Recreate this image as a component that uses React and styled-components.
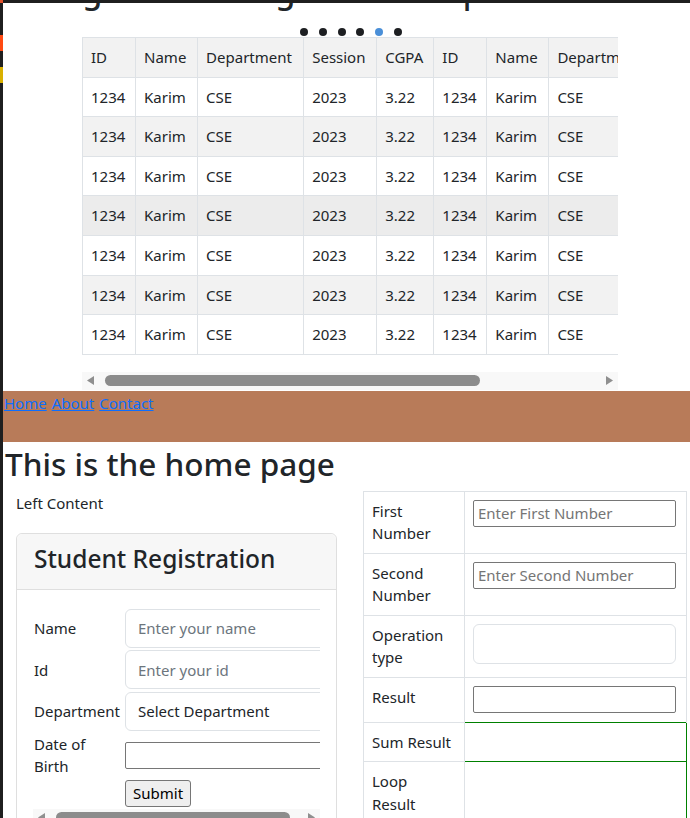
import React from "react";
import styled, { createGlobalStyle } from "styled-components";

const FONT = `"Noto Sans", "Open Sans", "Liberation Sans", sans-serif`;

const GlobalStyle = createGlobalStyle`
  html, body { margin: 0; padding: 0; background: #fff; overflow: hidden; }
  body { font-family: ${FONT}; font-size: 15px; color: #212529; }
  * { box-sizing: border-box; }
`;

const Frame = styled.div`
  display: flex;
  flex-direction: column;
  width: 690px;
  height: 818px;
  overflow: hidden;
`;

const TopBar = styled.div`
  display: flex;
  height: 3px;
  flex-shrink: 0;
  background: #1f1f1f;
`;

const Corner = styled.span`
  width: 3px;
  background: #e2502a;
`;

const Shell = styled.div`
  display: flex;
  flex: 1;
  min-height: 0;
`;

const Strip = styled.div`
  width: 3px;
  flex-shrink: 0;
  display: flex;
  flex-direction: column;
  background: #1f1f1f;
`;

const StripMark = styled.span`
  height: 16px;
  margin-top: ${(p) => p.$offset}px;
  background: ${(p) => p.$color};
`;

const Main = styled.main`
  flex: 1;
  min-width: 0;
  overflow: hidden;
`;

const HeadingClip = styled.div`
  height: 8px;
  overflow: hidden;
`;

const SlideTitle = styled.h2`
  margin: -32px 0 0 41px;
  font-size: 32px;
  line-height: 40px;
  font-weight: 500;
  white-space: nowrap;
`;

const Dots = styled.div`
  display: flex;
  gap: 10.8px;
  padding: 17px 0 0 297px;
  margin-bottom: 1px;
`;

const Dot = styled.span`
  width: 8px;
  height: 8px;
  border-radius: 50%;
  background: ${(p) => (p.$active ? "#4a8fd8" : "#1d1f22")};
`;

const TableViewport = styled.div`
  margin-left: 79px;
  width: 536px;
  overflow: hidden;
`;

const DataTable = styled.table`
  border-collapse: collapse;
  table-layout: fixed;
  width: 1055px;
  line-height: 22.6px;
`;

const HeadCell = styled.th`
  border: 1px solid #dee2e6;
  padding: 8px;
  text-align: left;
  font-weight: 400;
  white-space: nowrap;
  overflow: hidden;
  background: #f2f2f2;
`;

const Row = styled.tr`
  background: ${(p) => p.$bg};
`;

const Cell = styled.td`
  border: 1px solid #dee2e6;
  padding: 8px;
  white-space: nowrap;
  overflow: hidden;
`;

const Track = styled.div`
  display: flex;
  align-items: center;
  width: ${(p) => p.$width}px;
  height: 18px;
  margin: ${(p) => p.$margin};
  background: #f8f8f8;
  flex-shrink: 0;
`;

const ArrowBtn = styled.span`
  width: 17px;
  height: 17px;
  display: flex;
  align-items: center;
  justify-content: center;
  flex-shrink: 0;
`;

const Thumb = styled.span`
  height: 11px;
  border-radius: 6px;
  background: #8c8c8c;
  margin-left: ${(p) => p.$left - 17}px;
  width: ${(p) => p.$width}px;
  flex-shrink: 0;
`;

const Spacer = styled.span`
  flex: 1;
`;

const Nav = styled.nav`
  display: flex;
  gap: 5px;
  height: 51px;
  padding-left: 1px;
  background: #b87b59;
  line-height: 24px;
`;

const NavLink = styled.a`
  color: #0d6efd;
  text-decoration: underline;
  height: 24px;
`;

const PageTitle = styled.h1`
  margin: 3px 0 8px 2px;
  font-size: 31.5px;
  line-height: 38px;
  font-weight: 500;
`;

const Columns = styled.div`
  display: flex;
  align-items: flex-start;
`;

const LeftCol = styled.div`
  width: 343px;
  flex-shrink: 0;
  padding-left: 13px;
`;

const RightCol = styled.div`
  flex: 1;
  padding-left: 17px;
`;

const Muted = styled.div`
  line-height: 24px;
`;

const Card = styled.section`
  margin-top: 18px;
  width: 321px;
  border: 1px solid #dfdfdf;
  border-radius: 6px;
`;

const CardHeader = styled.header`
  background: #f7f7f7;
  border-bottom: 1px solid #dfdfdf;
  border-radius: 6px 6px 0 0;
  padding: 10px 17px 15px;
`;

const CardTitle = styled.h3`
  margin: 0;
  font-size: 24.5px;
  line-height: 30px;
  font-weight: 500;
`;

const CardBody = styled.div`
  padding: 16px;
`;

const FormViewport = styled.div`
  width: 287px;
  overflow: hidden;
`;

const FormGrid = styled.form`
  display: grid;
  grid-template-columns: 91px 218px;
  row-gap: 2.5px;
  align-items: center;
  padding: 3px 0 0 1px;
  width: 310px;
`;

const Label = styled.label`
  line-height: 22px;
`;

const Control = styled.input`
  height: 39px;
  width: 100%;
  padding: 6px 12px;
  border: 1px solid #dee2e6;
  border-radius: 6px;
  font: 15px ${FONT};
  color: #212529;
  background: #fff;
  &::placeholder { color: #6c757d; }
`;

const SelectControl = styled.select`
  height: 39px;
  width: 100%;
  padding: 6px 12px;
  border: 1px solid #dee2e6;
  border-radius: 6px;
  font: 15px ${FONT};
  color: #212529;
  background: #fff;
  appearance: none;
`;

const PlainInput = styled.input`
  display: block;
  height: 27px;
  width: ${(p) => p.$width || "100%"};
  margin-bottom: ${(p) => (p.$inCell ? "1px" : "0")};
  padding: 1px 4px;
  border: 1px solid #767676;
  border-radius: 2px;
  font: 15px ${FONT};
  color: #212529;
  background: #fff;
  &::placeholder { color: #757575; }
`;

const SubmitButton = styled.button`
  grid-column: 2;
  justify-self: start;
  height: 27px;
  padding: 1px 7px;
  border: 1px solid #767676;
  border-radius: 3px;
  background: #efefef;
  color: #000;
  font: 15px ${FONT};
`;

const CalcTable = styled.table`
  border-collapse: collapse;
  table-layout: fixed;
  width: 323px;
  line-height: 22.5px;
`;

const CalcRow = styled.tr`
  border-top: 1px solid #dee2e6;
  border-bottom: 1px solid #dee2e6;
`;

const CalcCell = styled.td`
  border-left: 1px solid #dee2e6;
  border-right: 1px solid #dee2e6;
  padding: 8px;
  vertical-align: top;
  ${(p) => (p.$green ? "border: 1px solid #008000;" : "")}
`;

const BoxSelect = styled.select`
  display: block;
  width: 203px;
  height: 40px;
  border: 1px solid #dee2e6;
  border-radius: 6px;
  background: #fff;
  appearance: none;
`;

function Arrow({ dir }) {
  return (
    <svg width="7" height="9" viewBox="0 0 7 9">
      <polygon points={dir === "left" ? "7,0 7,9 0,4.5" : "0,0 0,9 7,4.5"} fill="#8f8f8f" />
    </svg>
  );
}

function ScrollBar({ width, thumbLeft, thumbWidth, margin }) {
  return (
    <Track $width={width} $margin={margin}>
      <ArrowBtn><Arrow dir="left" /></ArrowBtn>
      <Thumb $left={thumbLeft} $width={thumbWidth} />
      <Spacer />
      <ArrowBtn><Arrow dir="right" /></ArrowBtn>
    </Track>
  );
}

const headers = ["ID", "Name", "Department", "Session", "CGPA"];
const widths = [53, 62, 106, 73, 57];
const rowValues = ["1234", "Karim", "CSE", "2023", "3.22"];
const rowBgs = ["#fff", "#f2f2f2", "#fff", "#ececec", "#fff", "#f2f2f2", "#fff"];
const groups = [0, 1, 2];

export default function App() {
  return (
    <>
      <GlobalStyle />
      <Frame>
        <TopBar><Corner /></TopBar>
        <Shell>
          <Strip>
            <StripMark $offset={32} $color="#ff4a12" />
            <StripMark $offset={16} $color="#d9b000" />
          </Strip>
          <Main>
            <HeadingClip>
              <SlideTitle>Registration Log of all Groups</SlideTitle>
            </HeadingClip>
            <Dots>
              {[0, 1, 2, 3, 4, 5].map((i) => (
                <Dot key={i} $active={i === 4} />
              ))}
            </Dots>
            <TableViewport>
              <DataTable>
                <colgroup>
                  {groups.flatMap((g) => widths.map((w, i) => <col key={`${g}-${i}`} style={{ width: w }} />))}
                </colgroup>
                <thead>
                  <tr>
                    {groups.flatMap((g) => headers.map((h) => <HeadCell key={`${g}-${h}`}>{h}</HeadCell>))}
                  </tr>
                </thead>
                <tbody>
                  {rowBgs.map((bg, r) => (
                    <Row key={r} $bg={bg}>
                      {groups.flatMap((g) => rowValues.map((v, i) => <Cell key={`${g}-${i}`}>{v}</Cell>))}
                    </Row>
                  ))}
                </tbody>
              </DataTable>
            </TableViewport>
            <ScrollBar width={536} thumbLeft={23} thumbWidth={375} margin="17px 0 1px 79px" />
            <Nav>
              <NavLink href="#home">Home</NavLink>
              <NavLink href="#about">About</NavLink>
              <NavLink href="#contact">Contact</NavLink>
            </Nav>
            <PageTitle>This is the home page</PageTitle>
            <Columns>
              <LeftCol>
                <Muted>Left Content</Muted>
                <Card>
                  <CardHeader>
                    <CardTitle>Student Registration</CardTitle>
                  </CardHeader>
                  <CardBody>
                    <FormViewport>
                      <FormGrid onSubmit={(e) => e.preventDefault()}>
                        <Label>Name</Label>
                        <Control placeholder="Enter your name" />
                        <Label>Id</Label>
                        <Control placeholder="Enter your id" />
                        <Label>Department</Label>
                        <SelectControl defaultValue="">
                          <option value="">Select Department</option>
                          <option value="cse">CSE</option>
                        </SelectControl>
                        <Label>Date of<br />Birth</Label>
                        <PlainInput />
                        <SubmitButton type="submit">Submit</SubmitButton>
                      </FormGrid>
                    </FormViewport>
                    <ScrollBar width={287} thumbLeft={23} thumbWidth={234} margin="2px 0 0 0" />
                  </CardBody>
                </Card>
              </LeftCol>
              <RightCol>
                <CalcTable>
                  <colgroup>
                    <col style={{ width: 101 }} />
                    <col style={{ width: 222 }} />
                  </colgroup>
                  <tbody>
                    <CalcRow>
                      <CalcCell>First<br />Number</CalcCell>
                      <CalcCell><PlainInput $inCell $width="203px" placeholder="Enter First Number" /></CalcCell>
                    </CalcRow>
                    <CalcRow>
                      <CalcCell>Second<br />Number</CalcCell>
                      <CalcCell><PlainInput $inCell $width="203px" placeholder="Enter Second Number" /></CalcCell>
                    </CalcRow>
                    <CalcRow>
                      <CalcCell>Operation<br />type</CalcCell>
                      <CalcCell><BoxSelect aria-label="Operation type" /></CalcCell>
                    </CalcRow>
                    <CalcRow>
                      <CalcCell>Result</CalcCell>
                      <CalcCell><PlainInput $inCell $width="203px" /></CalcCell>
                    </CalcRow>
                    <CalcRow>
                      <CalcCell>Sum Result</CalcCell>
                      <CalcCell $green>{"\u00a0"}</CalcCell>
                    </CalcRow>
                    <CalcRow>
                      <CalcCell>Loop<br />Result</CalcCell>
                      <CalcCell $green>{"\u00a0"}</CalcCell>
                    </CalcRow>
                  </tbody>
                </CalcTable>
              </RightCol>
            </Columns>
          </Main>
        </Shell>
      </Frame>
    </>
  );
}
